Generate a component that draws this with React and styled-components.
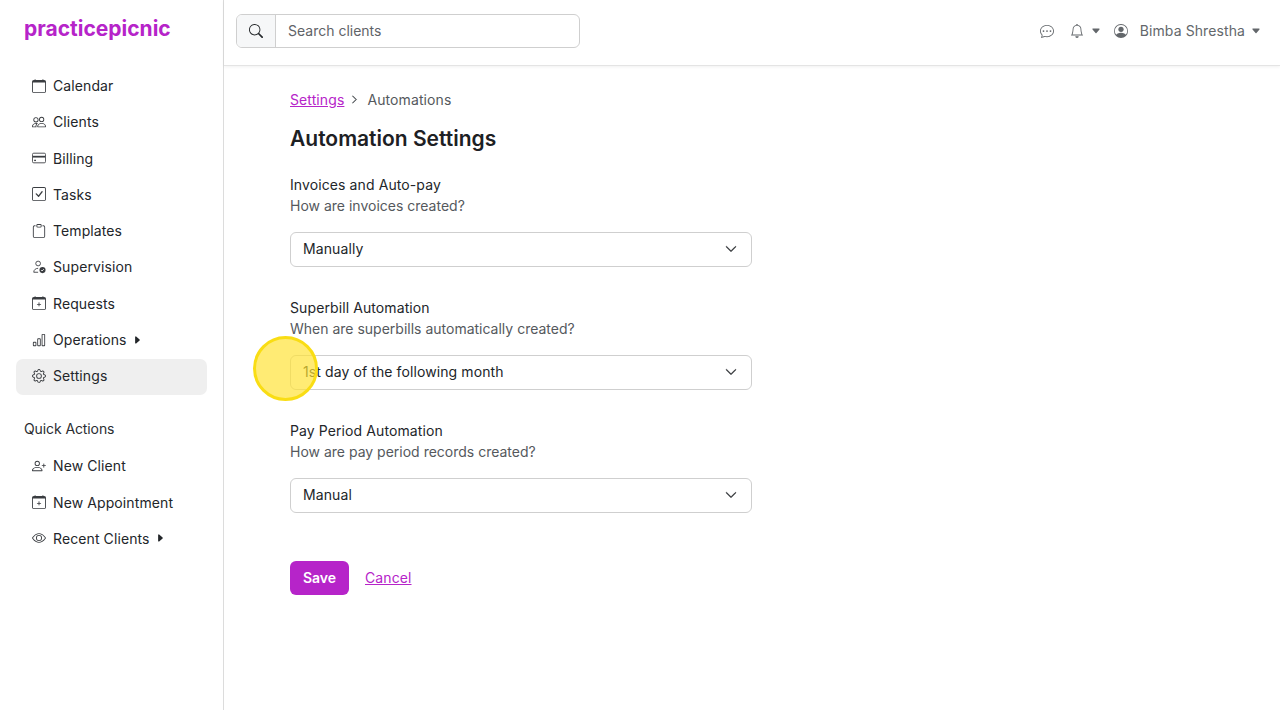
import React from 'react'
import styled, { createGlobalStyle } from 'styled-components'
import {
  BsCalendar, BsPeople, BsCheckSquare, BsClipboard, BsCalendarPlus, BsBarChart, BsGear,
  BsPersonPlus, BsEye, BsChatDots, BsBell, BsPersonCircle, BsSearch, BsChevronDown,
  BsCaretRightFill, BsCaretDownFill, BsChevronRight,
} from 'react-icons/bs'

const Global = createGlobalStyle`
  html, body { margin: 0; padding: 0; background: #fff; }
  body { font-family: Inter, "Liberation Sans", sans-serif; font-size: 14px; letter-spacing: 0.1px; color: #212529; overflow: hidden; }
`

const Shell = styled.div`
  display: flex;
  height: 710px;
  position: relative;
`

const Sidebar = styled.aside`
  width: 224px;
  flex-shrink: 0;
  border-right: 1px solid #dcdcdc;
  padding: 0 16px;
  box-sizing: border-box;
`

const Logo = styled.div`
  height: 56px;
  padding: 16px 0 0 8px;
  box-sizing: border-box;
  font-size: 21px;
  line-height: 25px;
  font-weight: 700;
  color: #b624c9;
  letter-spacing: 0;
`

const NavList = styled.nav`
  display: flex;
  flex-direction: column;
  gap: 0.3px;
  margin-top: ${(p) => p.$top}px;
`

const NavItem = styled.div`
  display: flex;
  align-items: center;
  height: 36px;
  width: 191px;
  padding: 0 0 2px 16px;
  box-sizing: border-box;
  border-radius: 7px;
  background: ${(p) => (p.$active ? '#efefef' : 'transparent')};
  color: #23262a;
  svg.nav-icon { width: 14px; height: 14px; margin-right: 7px; color: #3a3d41; flex-shrink: 0; }
  svg.caret { width: 10px; height: 10px; margin-left: 5px; }
`

const SectionTitle = styled.div`
  padding-left: 8px;
  margin-top: 16.500px;
  height: 36px;
  line-height: 36px;
  letter-spacing: -0.1px;
  color: #2b2e32;
`

const Right = styled.div`
  flex: 1;
  display: flex;
  flex-direction: column;
`

const Topbar = styled.header`
  height: 66px;
  box-sizing: border-box;
  display: flex;
  align-items: center;
  justify-content: space-between;
  padding: 0 19px 4px 12px;
  border-bottom: 1px solid #e4e4e4;
  box-shadow: 0 1px 3px rgba(0, 0, 0, 0.06);
`

const SearchGroup = styled.div`
  display: flex;
  width: 344px;
  height: 34px;
  box-sizing: border-box;
  border: 1px solid #cfcfcf;
  border-radius: 6px;
  overflow: hidden;
`

const SearchAddon = styled.div`
  width: 38px;
  display: flex;
  align-items: center;
  justify-content: center;
  background: #f6f7f8;
  border-right: 1px solid #cfcfcf;
  svg { width: 14px; height: 14px; color: #26292c; }
`

const SearchText = styled.div`
  flex: 1;
  padding-left: 12px;
  line-height: 32px;
  letter-spacing: 0;
  color: #5f6368;
`

const TopActions = styled.div`
  display: flex;
  align-items: center;
  color: #63676b;
  svg { width: 14px; height: 14px; }
  svg.caret { width: 10px; height: 10px; }
`

const BellIcon = styled(BsBell)`
  margin: 0 7px 0 16px;
`

const UserIcon = styled(BsPersonCircle)`
  margin-left: 13px;
`

const UserName = styled.span`
  margin: 0 6px 0 12px;
`

const Main = styled.main`
  padding: 23px 0 0 66px;
`

const Crumbs = styled.div`
  display: flex;
  align-items: center;
  height: 20px;
  color: #55595d;
  svg { width: 9px; height: 9px; margin: 0 8px 0 6px; color: #55595d; stroke: currentColor; stroke-width: 1.2px; }
`

const LinkText = styled.a`
  color: #b624c9;
  text-decoration: underline;
`

const Title = styled.h1`
  margin: 18px 0 0;
  font-size: 21px;
  line-height: 24px;
  font-weight: 600;
  letter-spacing: 0;
  color: #1d2023;
`

const Group = styled.section`
  width: 462px;
  margin-top: ${(p) => p.$top}px;
`

const Label = styled.div`
  line-height: 21px;
  color: #23262a;
`

const Help = styled.div`
  line-height: 21px;
  letter-spacing: 0;
  color: #55595d;
`

const Select = styled.div`
  margin-top: 16px;
  height: 34.5px;
  box-sizing: border-box;
  border: 1px solid #cfcfcf;
  border-radius: 6px;
  padding: 0 14px 1px 12px;
  display: flex;
  align-items: center;
  justify-content: space-between;
  color: #212529;
  svg { width: 12px; height: 12px; color: #2a2d30; stroke: currentColor; stroke-width: 0.8px; }
`

const Buttons = styled.div`
  display: flex;
  align-items: center;
  gap: 16px;
  margin-top: 48px;
`

const SaveButton = styled.button`
  width: 59px;
  height: 34px;
  border: 0;
  border-radius: 6px;
  background: #b624c9;
  color: #fff;
  font: 600 14px Inter, "Liberation Sans", sans-serif;
`

const ClickMark = styled.div`
  position: absolute;
  left: 253px;
  top: 336px;
  width: 65px;
  height: 65px;
  box-sizing: border-box;
  border-radius: 50%;
  background: rgba(255, 226, 50, 0.68);
  border: 3px solid #f9dd14;
`

const CardIcon = () => (
  <svg className="nav-icon" viewBox="0 0 16 16" fill="none" stroke="currentColor">
    <rect x="0.5" y="2.5" width="15" height="11" rx="1.5" />
    <path d="M1 5.5h14V7.500H1z" fill="currentColor" stroke="none" />
    <rect x="2.500" y="10" width="2" height="1.500" fill="currentColor" stroke="none" />
  </svg>
)

const SuperviseIcon = () => (
  <svg className="nav-icon" viewBox="0 0 16 16" fill="none" stroke="currentColor">
    <circle cx="7" cy="4" r="2.700" />
    <path d="M2 14c0-3 2.500-4.500 5-4.500M2 14h5" />
    <circle cx="12" cy="11.500" r="3.500" fill="currentColor" stroke="none" />
    <path d="M10.500 11.500l1 1 2-2" stroke="#fff" strokeWidth="1" />
  </svg>
)

const mainNav = [
  { label: 'Calendar', Icon: BsCalendar },
  { label: 'Clients', Icon: BsPeople },
  { label: 'Billing', Icon: CardIcon },
  { label: 'Tasks', Icon: BsCheckSquare },
  { label: 'Templates', Icon: BsClipboard },
  { label: 'Supervision', Icon: SuperviseIcon },
  { label: 'Requests', Icon: BsCalendarPlus },
  { label: 'Operations', Icon: BsBarChart, more: true },
  { label: 'Settings', Icon: BsGear, active: true },
]

const quickNav = [
  { label: 'New Client', Icon: BsPersonPlus },
  { label: 'New Appointment', Icon: BsCalendarPlus },
  { label: 'Recent Clients', Icon: BsEye, more: true },
]

const groups = [
  { label: 'Invoices and Auto-pay', help: 'How are invoices created?', value: 'Manually', top: 23 },
  { label: 'Superbill Automation', help: 'When are superbills automatically created?', value: '1st day of the following month', top: 30.5 },
  { label: 'Pay Period Automation', help: 'How are pay period records created?', value: 'Manual', top: 30.5 },
]

const renderNav = (items) =>
  items.map(({ label, Icon, more, active }) => (
    <NavItem key={label} $active={active}>
      <Icon className="nav-icon" />
      {label}
      {more && <BsCaretRightFill className="caret" />}
    </NavItem>
  ))

export default function App() {
  return (
    <Shell>
      <Global />
      <Sidebar>
        <Logo>practicepicnic</Logo>
        <NavList $top={12.5}>{renderNav(mainNav)}</NavList>
        <SectionTitle>Quick Actions</SectionTitle>
        <NavList $top={1.5}>{renderNav(quickNav)}</NavList>
      </Sidebar>
      <Right>
        <Topbar>
          <SearchGroup>
            <SearchAddon><BsSearch /></SearchAddon>
            <SearchText>Search clients</SearchText>
          </SearchGroup>
          <TopActions>
            <BsChatDots />
            <BellIcon />
            <BsCaretDownFill className="caret" />
            <UserIcon />
            <UserName>Bimba Shrestha</UserName>
            <BsCaretDownFill className="caret" />
          </TopActions>
        </Topbar>
        <Main>
          <Crumbs>
            <LinkText>Settings</LinkText>
            <BsChevronRight />
            Automations
          </Crumbs>
          <Title>Automation Settings</Title>
          {groups.map((g) => (
            <Group key={g.label} $top={g.top}>
              <Label>{g.label}</Label>
              <Help>{g.help}</Help>
              <Select>
                {g.value}
                <BsChevronDown />
              </Select>
            </Group>
          ))}
          <Buttons>
            <SaveButton>Save</SaveButton>
            <LinkText>Cancel</LinkText>
          </Buttons>
        </Main>
      </Right>
      <ClickMark />
    </Shell>
  )
}
